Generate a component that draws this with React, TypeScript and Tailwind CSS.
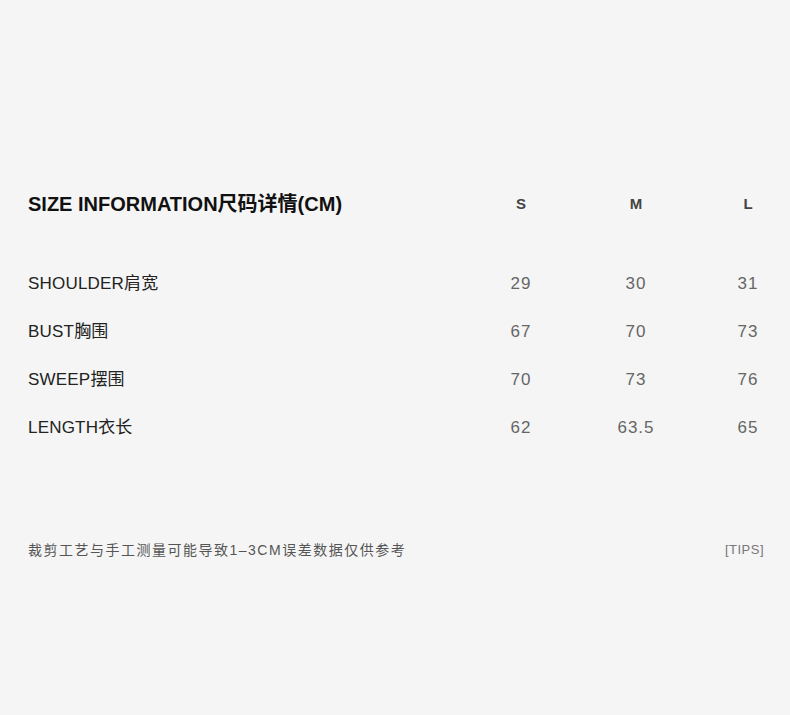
const rows = [
  { label: "SHOULDER肩宽", s: "29", m: "30", l: "31" },
  { label: "BUST胸围", s: "67", m: "70", l: "73" },
  { label: "SWEEP摆围", s: "70", m: "73", l: "76" },
  { label: "LENGTH衣长", s: "62", m: "63.5", l: "65" },
];

const font = "font-['Liberation_Sans','Noto_Sans_CJK_SC',sans-serif]";

export default function App() {
  return (
    <div className={`w-[790px] h-[715px] bg-[#f5f5f5] ${font} pt-[180px] pl-[28px] pr-[2px]`}>
      {/* Header */}
      <div className="flex items-center h-[48px]">
        <h2 className="flex-1 text-[20px] font-bold text-[#111]">
          SIZE INFORMATION尺码详情(CM)
        </h2>
        <span className="w-[80px] text-center text-[15px] font-bold text-[#444]">S</span>
        <span className="w-[80px] ml-[35px] text-center text-[15px] font-bold text-[#444]">M</span>
        <span className="w-[80px] ml-[32px] text-center text-[15px] font-bold text-[#444]">L</span>
      </div>

      {/* Rows */}
      <div className="mt-[32px]">
        {rows.map((r) => (
          <div key={r.label} className="flex items-center h-[48px]">
            <span className="flex-1 text-[17px] tracking-[0.2px] text-[#222]">{r.label}</span>
            <span className="w-[80px] text-center text-[17px] tracking-[1px] text-[#666]">{r.s}</span>
            <span className="w-[80px] ml-[35px] text-center text-[17px] tracking-[1px] text-[#666]">{r.m}</span>
            <span className="w-[80px] ml-[32px] text-center text-[17px] tracking-[1px] text-[#666]">{r.l}</span>
          </div>
        ))}
      </div>

      {/* Footer */}
      <div className="flex items-center justify-between h-[40px] mt-[78px] pr-[24px]">
        <span className="text-[14px] tracking-[1.5px] text-[#555]">裁剪工艺与手工测量可能导致1–3CM误差数据仅供参考</span>
        <span className="text-[13px] tracking-[0.5px] text-[#777]">[TIPS]</span>
      </div>
    </div>
  );
}
